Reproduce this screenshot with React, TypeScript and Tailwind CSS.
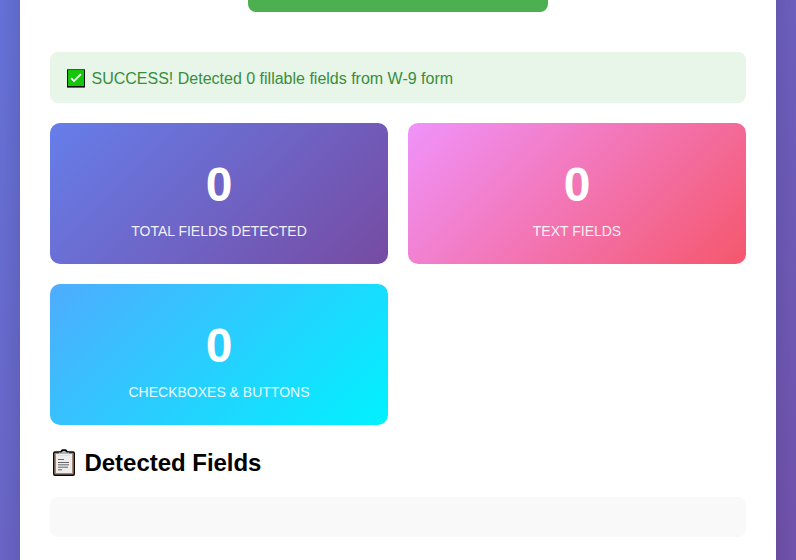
const stats = [
  { value: 0, label: "TOTAL FIELDS DETECTED", tone: "from-[#667eea] to-[#764ba2]" },
  { value: 0, label: "TEXT FIELDS", tone: "from-[#f093fb] to-[#f5576c]" },
  { value: 0, label: "CHECKBOXES & BUTTONS", tone: "from-[#4facfe] to-[#00f2fe]" },
];

function CheckMark() {
  return (
    <svg width="18" height="19" viewBox="0 0 18 19" className="mt-[2px] block shrink-0">
      <rect width="18" height="19" fill="#111" />
      <rect width="18" height="1" fill="#405640" />
      <rect y="18" width="18" height="1" fill="#56725a" />
      <rect x="1" y="1" width="16" height="16" fill="#16c60c" />
      <path d="M4.1 9.1 7 12.1 13.9 5.1" fill="none" stroke="#fff" strokeWidth="1.7" />
    </svg>
  );
}

function Clipboard() {
  return (
    <svg width="22" height="27" viewBox="0 0 22 27" className="-mt-[2px] block shrink-0">
      <path d="M2 2.2h5.2L9 .3h4l1.8 1.9H20q2 0 2 2V25q0 2-2 2H2q-2 0-2-2V4.2q0-2 2-2Z" fill="#080808" />
      <rect x="1.3" y="3.7" width="19.4" height="21.9" rx="1" fill="#a8866d" />
      <rect x="3" y="5" width="16" height="19" fill="#ededed" />
      <path d="M6 5V3.5h2.5L9.8 2h2.4l1.3 1.5H16V5Z" fill="#aeb5ba" />
      <path d="M5 6.5h12" stroke="#dcdfe1" />
      <path d="M5 10.5h6M5 13.5h11M5 15.8h11M5 18.2h10M5 20.8h4" stroke="#666" strokeWidth="1" />
    </svg>
  );
}

export default function App() {
  return (
    <main className="h-[560px] overflow-hidden bg-linear-[135deg,#6876df,#7555b2] px-5 font-['Liberation_Sans',Arial,sans-serif] text-black">
      <div className="-mt-[200px] h-[1000px] bg-white px-[30px] pt-[200px] shadow-[0_10px_40px_rgba(0,0,0,0.2)]">
        <div className="mx-auto h-3 w-[300px] rounded-b-lg bg-[#4caf50]" />
        <div className="mt-10 flex h-[51px] items-center gap-[6.5px] rounded-lg bg-[#e8f5e9] pl-[17px] text-base text-[#388e3c]">
          <CheckMark />
          <p className="pt-[2px]">SUCCESS! Detected 0 fillable fields from W-9 form</p>
        </div>
        <section className="mt-5 grid grid-cols-2 gap-5">
          {stats.map((s) => (
            <div
              key={s.label}
              className={`flex h-[141px] flex-col items-center rounded-[10px] bg-linear-[135deg,var(--tw-gradient-from),var(--tw-gradient-to)] pt-[34px] text-white ${s.tone}`}
            >
              <div className="text-5xl leading-[55px] font-bold">{s.value}</div>
              <div className="mt-[11px] text-sm leading-4 opacity-90">{s.label}</div>
            </div>
          ))}
        </section>
        <h2 className="mt-6 flex h-7 items-center gap-[9.5px] pl-[3px] text-2xl leading-7 font-bold tracking-[-0.03px]">
          <Clipboard />
          Detected Fields
        </h2>
        <div className="mt-5 h-10 rounded-lg bg-[#f9f9f9]" />
      </div>
    </main>
  );
}
